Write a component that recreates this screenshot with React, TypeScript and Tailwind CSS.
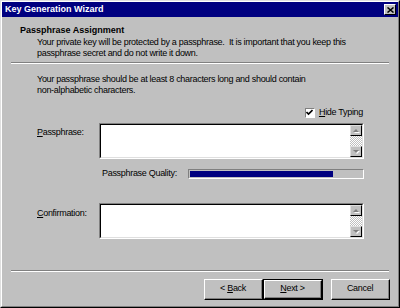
import React from "react";

const font = { fontFamily: '"Liberation Sans", Arial, sans-serif' };

function ScrollArrow({ up }: { up: boolean }) {
  return (
    <div className="w-[12px] h-[11px] bg-[#c0c0c0] border-t border-l border-t-[#dfdfdf] border-l-[#dfdfdf] border-r border-b border-r-black border-b-black flex items-center justify-center">
      <svg width="7" height="4" viewBox="0 0 7 4">
        {up ? (
          <>
            <polygon points="1,4 4,1 7,4" fill="#ffffff" />
            <polygon points="0,3 3,0 6,3" fill="#808080" />
          </>
        ) : (
          <>
            <polygon points="1,1 7,1 4,4" fill="#ffffff" />
            <polygon points="0,0 6,0 3,3" fill="#808080" />
          </>
        )}
      </svg>
    </div>
  );
}

function TextArea() {
  return (
    <div className="w-[265px] h-[36px] border-t border-l border-t-[#808080] border-l-[#808080] border-r border-b border-r-white border-b-white">
      <div className="w-full h-full bg-white border-t border-l border-t-black border-l-black border-r border-b border-r-[#dfdfdf] border-b-[#dfdfdf] flex justify-end">
        <div className="w-[12px] h-full flex flex-col">
          <ScrollArrow up />
          <div className="flex-1 bg-[repeating-conic-gradient(#c0c0c0_0_25%,#ffffff_0_50%)] bg-[length:2px_2px]" />
          <ScrollArrow up={false} />
        </div>
      </div>
    </div>
  );
}

function Button({ label, def }: { label: React.ReactNode; def?: boolean }) {
  const inner = (
    <div className="w-full h-full border-t border-l border-t-white border-l-white border-r border-b border-r-black border-b-black">
      <div className="w-full h-full border-r border-b border-r-[#808080] border-b-[#808080] flex items-center justify-center text-[9px] tracking-[-0.3px] text-black">
        {label}
      </div>
    </div>
  );
  if (def) {
    return <div className="w-[60px] h-[21px] border border-black">{inner}</div>;
  }
  return <div className="w-[59px] h-[21px]">{inner}</div>;
}

export default function App() {
  return (
    <div
      style={font}
      className="w-[400px] h-[308px] bg-[#c0c0c0] border-t border-l border-t-[#dfdfdf] border-l-[#dfdfdf] border-r border-b border-r-black border-b-black"
    >
      <div className="w-full h-full border-t border-l border-t-white border-l-white border-r border-b border-r-[#808080] border-b-[#808080] flex flex-col">
        {/* Title bar */}
        <div className="h-[15px] bg-[#000080] flex items-center justify-between pl-[3px] pr-[2px]">
          <span className="text-white font-bold text-[9px] leading-none">Key Generation Wizard</span>
          <div className="w-[12px] h-[11px] bg-[#c0c0c0] border-t border-l border-t-white border-l-white border-r border-b border-r-black border-b-black flex items-center justify-center">
            <svg width="7" height="6" viewBox="0 0 7 6">
              <path d="M0.5 0.5 L6.5 5.5 M6.5 0.5 L0.5 5.5" stroke="#000" strokeWidth="1.5" />
            </svg>
          </div>
        </div>

        {/* Header */}
        <div className="pt-[8px] pl-[18px] text-[9px] leading-[11px] text-black">
          <div className="font-bold">Passphrase Assignment</div>
          <div className="pl-[17px] mt-[1px] tracking-[-0.3px]">
            Your private key will be protected by a passphrase.&nbsp; It is important that you keep this
            <br />
            passphrase secret and do not write it down.
          </div>
        </div>
        <div className="mx-[9px] mt-[3px] h-[2px] border-t border-t-[#808080] border-b border-b-white" />

        {/* Content */}
        <div className="pl-[35px] pr-[34px] text-[9px] leading-[11px] text-black tracking-[-0.3px]">
          <div className="mt-[10px]">
            Your passphrase should be at least 8 characters long and should contain
            <br />
            non-alphabetic characters.
          </div>
          <div className="mt-[11px] flex justify-end items-center gap-[4px] pr-[1px]">
            <div className="w-[10px] h-[10px] bg-white border-t border-l border-t-[#808080] border-l-[#808080] border-r border-b border-r-white border-b-white flex items-center justify-center">
              <svg width="7" height="7" viewBox="0 0 7 7">
                <path d="M0.5 3 L2.5 5 L6.5 1" stroke="#000" strokeWidth="1.6" fill="none" />
              </svg>
            </div>
            <span>
              <u>H</u>ide Typing
            </span>
          </div>
          <div className="mt-[5px] flex">
            <div className="w-[62px] pt-[4px]">
              <u>P</u>assphrase:
            </div>
            <TextArea />
          </div>
          <div className="mt-[9px] flex items-center">
            <div className="w-[151px] pl-[65px]">Passphrase Quality:</div>
            <div className="w-[176px] h-[10px] border-t border-l border-t-[#808080] border-l-[#808080] border-r border-b border-r-white border-b-white p-[1px]">
              <div className="h-full w-[83%] bg-[#000080]" />
            </div>
          </div>
          <div className="mt-[24px] flex">
            <div className="w-[62px] pt-[5px]">
              <u>C</u>onfirmation:
            </div>
            <TextArea />
          </div>
        </div>

        <div className="mx-[9px] mt-[31px] h-[2px] border-t border-t-[#808080] border-b border-b-white" />

        <div className="mt-[7px] flex justify-end pr-[8px]">
          <Button label={<span>&lt; <u>B</u>ack</span>} />
          <Button def label={<span><u>N</u>ext &gt;</span>} />
          <div className="w-[8px]" />
          <Button label={<span>Cancel</span>} />
        </div>
      </div>
    </div>
  );
}
